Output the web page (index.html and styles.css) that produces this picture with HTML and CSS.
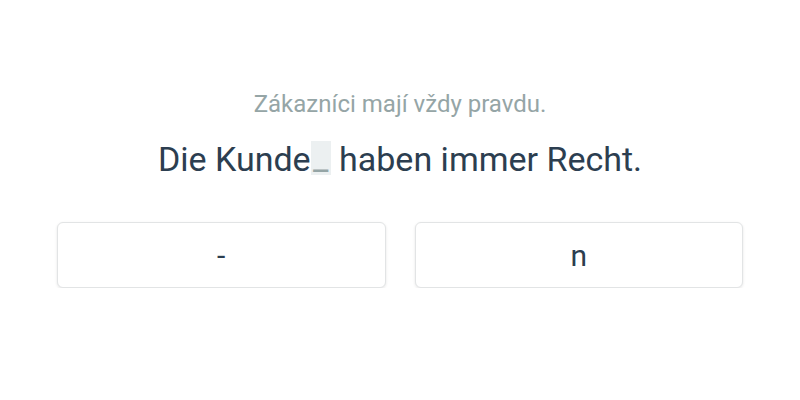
FILE: index.html
```html
<!DOCTYPE html>
<html>
<head>
    <meta charset="utf-8" />
    <title>Cvičení</title>
    <link rel="stylesheet" href="styles.css">
</head>
<body>
    <div class="exercise">
        <p class="hint">Zákazníci mají vždy pravdu.</p>
        <p class="sentence">Die Kunde<span class="blank">_</span> haben immer Recht.</p>
        <div class="answers">
            <button class="answer">-</button>
            <button class="answer">n</button>
        </div>
    </div>
</body>
</html>
```

FILE: styles.css
```css
body {
    margin: 0;
    background: #fff;
    font-family: Roboto, "Liberation Sans", sans-serif;
    color: #2c3e50;
}

.exercise {
    width: 686px;
    margin: 0 auto;
    padding-top: 90px;
    text-align: center;
}

.hint {
    margin: 0;
    font-size: 24px;
    line-height: 28px;
    color: #95a5a6;
}

.sentence {
    margin: 21px 0 0;
    font-size: 34px;
    line-height: 40px;
}

    .sentence .blank {
        display: inline-block;
        width: 20px;
        height: 34px;
        line-height: 34px;
        vertical-align: 1px;
        background: #ecf0f1;
        color: #95a5a6;
    }

.answers {
    display: grid;
    grid-template-columns: 1fr 1fr;
    gap: 29px;
    margin-top: 43px;
}

.answer {
    height: 66px;
    border: 1px solid #e2e4e5;
    border-radius: 6px;
    background: #fff;
    box-shadow: 0 1px 3px rgba(0,0,0,.1);
    font-family: inherit;
    font-size: 30px;
    color: #2c3e50;
}
```
